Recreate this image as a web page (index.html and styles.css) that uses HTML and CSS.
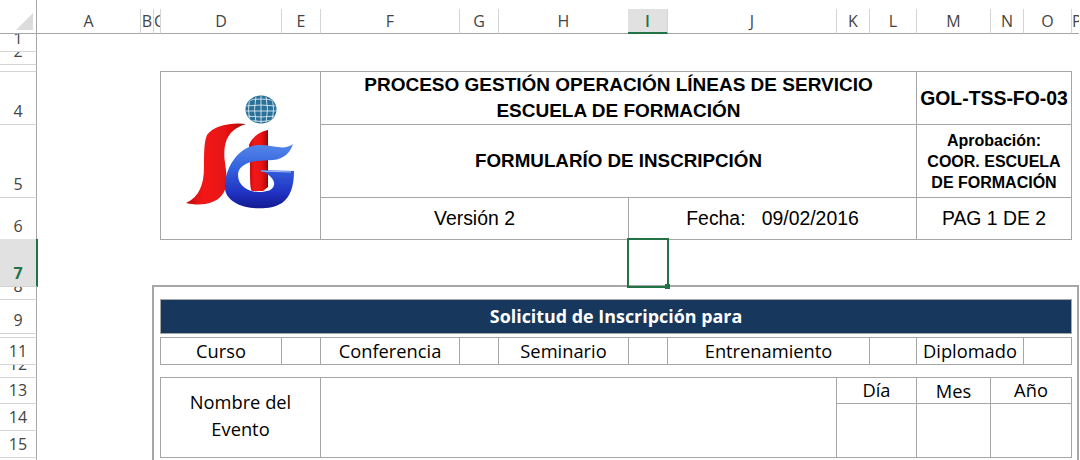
FILE: index.html
```html
<!DOCTYPE html>
<html lang="es">
<head>
  <meta charset="UTF-8" />
  <title>Formulario de Inscripción</title>
  <link rel="stylesheet" href="styles.css">
</head>
<body>
  <div class="sheet">
    <!-- column headers -->
    <div class="corner"><div class="corner-tri"></div></div>
    <div class="ch col-a">A</div>
    <div class="ch col-b">B</div>
    <div class="ch col-c">C</div>
    <div class="ch col-d">D</div>
    <div class="ch col-e">E</div>
    <div class="ch col-f">F</div>
    <div class="ch col-g">G</div>
    <div class="ch col-h">H</div>
    <div class="ch col-i ch-on">I</div>
    <div class="ch col-j">J</div>
    <div class="ch col-k">K</div>
    <div class="ch col-l">L</div>
    <div class="ch col-m">M</div>
    <div class="ch col-n">N</div>
    <div class="ch col-o">O</div>
    <div class="ch col-p">P</div>

    <!-- row headers -->
    <div class="rh row-1"><span>1</span></div>
    <div class="rh row-2"><span>2</span></div>
    <div class="rh row-3"></div>
    <div class="rh row-4"><span>4</span></div>
    <div class="rh row-5"><span>5</span></div>
    <div class="rh row-6"><span>6</span></div>
    <div class="rh row-7 rh-on"><span>7</span></div>
    <div class="rh row-8"><span>8</span></div>
    <div class="rh row-9"><span>9</span></div>
    <div class="rh row-10"></div>
    <div class="rh row-11"><span>11</span></div>
    <div class="rh row-12"><span>12</span></div>
    <div class="rh row-13"><span>13</span></div>
    <div class="rh row-14"><span>14</span></div>
    <div class="rh row-15"><span>15</span></div>
    <div class="rh row-16"><span>16</span></div>

    <!-- document header -->
    <div class="cell logo">
      <svg class="logo-svg" viewBox="160 71 160 168" xmlns="http://www.w3.org/2000/svg">
        <defs>
          <linearGradient id="redFill" x1="0" y1="0" x2="1" y2="0">
            <stop offset="0" stop-color="#c20a0a" />
            <stop offset="0.3" stop-color="#f41818" />
            <stop offset="0.75" stop-color="#e21010" />
            <stop offset="1" stop-color="#8e0505" />
          </linearGradient>
          <linearGradient id="blueFill" x1="0" y1="0" x2="0" y2="1">
            <stop offset="0" stop-color="#5586ea" />
            <stop offset="0.35" stop-color="#3565de" />
            <stop offset="0.75" stop-color="#2233c4" />
            <stop offset="1" stop-color="#121a90" />
          </linearGradient>
          <clipPath id="globeClip">
            <ellipse cx="260" cy="108.5" rx="15" ry="13.5" />
          </clipPath>
          <filter id="soft" x="-10%" y="-10%" width="120%" height="120%">
            <feGaussianBlur stdDeviation="0.75" />
          </filter>
        </defs>
        <g filter="url(#soft)">
          <ellipse cx="260" cy="108.5" rx="15.5" ry="14" fill="#2a7199" />
          <g clip-path="url(#globeClip)" stroke="#d8e8f0" stroke-width="0.9" fill="none">
            <path d="M245 100 Q260 96 275 100 M245 105 Q260 103 275 105 M245 110 H275 M245 115 Q260 117 275 115 M245 119 Q260 122 275 119" />
            <path d="M250 95 Q245 108 250 122 M255 95 Q252 108 255 122 M260 95 V122 M265 95 Q268 108 265 122 M270 95 Q275 108 270 122" />
          </g>
          <path fill="url(#redFill)" d="M245 123 C232 121 213 124 206 134 C203 141 203 152 203 166 C203 184 198 196 185 202 C198 205 213 204 221 194 C227 187 226 176 224 162 C222 148 224 136 233 129 C237 126 241 124 245 123 Z" />
          <path fill="url(#redFill)" d="M267 129 L267 186 L262 190 L251 190 C249 188 249 180 249 160 L248 144 C251 136 258 131 267 129 Z" />
          <path fill="url(#blueFill)" d="M292 143 C289 152 283 158 272 159 L256 160 C245 161 237 166 237 174 C237 184 246 191 258 191 C266 191 272 189 273 184 C274 179 269 173 258 169 L293 170 C293 186 289 196 281 202 C273 207 262 208 252 207 C238 206 224 198 224 187 C223 172 233 152 248 146 C258 142 268 145 277 146 C283 147 288 146 292 143 Z" />
          <path fill="none" stroke="#dfe9ff" stroke-width="1.2" opacity="0.7" d="M260 170 L290 171" />
        </g>
      </svg>
    </div>
    <div class="cell title bold">PROCESO GESTIÓN OPERACIÓN LÍNEAS DE SERVICIO<br>ESCUELA DE FORMACIÓN</div>
    <div class="cell code bold">GOL-TSS-FO-03</div>
    <div class="cell subtitle bold">FORMULARÍO DE INSCRIPCIÓN</div>
    <div class="cell approval bold">Aprobación:<br>COOR. ESCUELA<br>DE FORMACIÓN</div>
    <div class="cell version arial">Versión 2</div>
    <div class="cell date arial">Fecha:   09/02/2016</div>
    <div class="cell page arial">PAG 1 DE 2</div>

    <!-- form box -->
    <div class="form-box"></div>
    <div class="cell banner">Solicitud de Inscripción para</div>

    <div class="cell kind k-curso">Curso</div>
    <div class="cell k-curso-v"></div>
    <div class="cell kind k-conf">Conferencia</div>
    <div class="cell k-conf-v"></div>
    <div class="cell kind k-sem">Seminario</div>
    <div class="cell k-sem-v"></div>
    <div class="cell kind k-ent">Entrenamiento</div>
    <div class="cell k-ent-v"></div>
    <div class="cell kind k-dip">Diplomado</div>
    <div class="cell k-dip-v"></div>

    <div class="cell kind event-label">Nombre del<br>Evento</div>
    <div class="cell event-value"></div>
    <div class="cell kind day-h">Día</div>
    <div class="cell kind month-h">Mes</div>
    <div class="cell kind year-h">Año</div>
    <div class="cell day-v"></div>
    <div class="cell month-v"></div>
    <div class="cell year-v"></div>

    <!-- selected cell -->
    <div class="selected"><div class="handle"></div></div>
  </div>
</body>
</html>
```

FILE: styles.css
```css
html, body {
  margin: 0;
  padding: 0;
  background-color: white;
}
.sheet {
  display: grid;
  width: 1080px;
  height: 460px;
  overflow: hidden;
  font-family: 'Open Sans', 'Noto Sans', sans-serif;
  color: black;
  grid-template-columns:
    [hdr] 37px [a] 104px [b] 13px [c] 7px [d] 121px [e] 39px [f] 139px [g] 39px
    [h] 130px [i] 39px [j] 169px [k] 33px [l] 47px [m] 74px [n] 33px [o] 48px
    [p] 7px [q] 1fr;
  grid-template-rows:
    [top] 34px [r1] 18px [r2] 13px [r3] 7px [r4] 53px [r5] 73px [r6] 42px [r7] 47px
    [r8] 13px [r9] 34px [r10] 4px [r11] 27px [r12] 13px [r13] 26px [r14] 27px
    [r15] 27px [r16] 1fr;
}

/* column headers */
.corner {
  grid-column: hdr / a;
  grid-row: top / r1;
  border-right: 1px solid #a6a6a6;
  border-bottom: 1px solid #a6a6a6;
  position: relative;
}
.corner-tri {
  position: absolute;
  left: 16px;
  top: 13px;
  width: 17px;
  height: 17px;
  background-color: #dcdcdc;
  clip-path: polygon(100% 0, 100% 100%, 0 100%);
}
.ch {
  grid-row: top / r1;
  margin-top: 9px;
  border-right: 1px solid #d4d4d4;
  border-bottom: 1px solid #a6a6a6;
  overflow: hidden;
  text-align: center;
  font-size: 16px;
  line-height: 24px;
  color: #444;
}
.ch-on {
  background-color: #e1e1e1;
  color: #217346;
  font-weight: 600;
  border-bottom: 2px solid #217346;
  margin-left: -1px;
}
.col-a { grid-column: a / b; }
.col-b { grid-column: b / c; }
.col-c { grid-column: c / d; }
.col-d { grid-column: d / e; }
.col-e { grid-column: e / f; }
.col-f { grid-column: f / g; }
.col-g { grid-column: g / h; }
.col-h { grid-column: h / i; }
.col-i { grid-column: i / j; }
.col-j { grid-column: j / k; }
.col-k { grid-column: k / l; }
.col-l { grid-column: l / m; }
.col-m { grid-column: m / n; }
.col-n { grid-column: n / o; }
.col-o { grid-column: o / p; }
.col-p { grid-column: p / q; border-right: none; }

/* row headers */
.rh {
  grid-column: hdr / a;
  display: flex;
  align-items: flex-end;
  justify-content: center;
  overflow: hidden;
  border-right: 1px solid #a6a6a6;
  border-bottom: 1px solid #d4d4d4;
  font-size: 16px;
  color: #444;
}
.rh span {
  display: block;
  flex: none;
  line-height: 22px;
  height: 22px;
  margin-bottom: 2px;
}
.rh-on {
  background-color: #e1e1e1;
  color: #217346;
  font-weight: 700;
  border-right: 2px solid #217346;
  margin-top: -1px;
  margin-right: -1px;
}
.row-1 { grid-row: r1 / r2; }
.row-2 { grid-row: r2 / r3; }
.row-3 { grid-row: r3 / r4; }
.row-4 { grid-row: r4 / r5; }
.row-5 { grid-row: r5 / r6; }
.row-6 { grid-row: r6 / r7; }
.row-7 { grid-row: r7 / r8; }
.row-8 { grid-row: r8 / r9; }
.row-9 { grid-row: r9 / r10; }
.row-10 { grid-row: r10 / r11; }
.row-11 { grid-row: r11 / r12; }
.row-12 { grid-row: r12 / r13; }
.row-13 { grid-row: r13 / r14; }
.row-14 { grid-row: r14 / r15; }
.row-15 { grid-row: r15 / r16; }
.row-16 { grid-row: r16 / span 1; border-bottom: none; }

/* bordered cells */
.cell {
  display: flex;
  align-items: center;
  justify-content: center;
  text-align: center;
  margin: -1px 0 0 -1px;
  border: 1px solid #a6a6a6;
  min-width: 0;
  min-height: 0;
}
.bold {
  font-family: 'Liberation Sans', Arial, sans-serif;
  font-weight: bold;
}
.arial {
  font-family: 'Liberation Sans', Arial, sans-serif;
  font-size: 19.4px;
}

.logo { grid-column: d / f; grid-row: r4 / r7; }
.logo-svg { display: block; width: 160px; height: 168px; flex: none; }
.title { grid-column: f / m; grid-row: r4 / r5; font-size: 19px; line-height: 26px; }
.code { grid-column: m / p; grid-row: r4 / r5; font-size: 19.4px; }
.subtitle { grid-column: f / m; grid-row: r5 / r6; font-size: 18.8px; }
.approval { grid-column: m / p; grid-row: r5 / r6; font-size: 16px; line-height: 21px; }
.version { grid-column: f / i; grid-row: r6 / r7; }
.date { grid-column: i / m; grid-row: r6 / r7; white-space: pre; }
.page { grid-column: m / p; grid-row: r6 / r7; }

.form-box {
  grid-column: c / -1;
  grid-row: r8 / -1;
  margin: -2px 1px -10px -2px;
  border: 2px solid #a6a6a6;
  box-sizing: border-box;
}
.banner {
  grid-column: d / p;
  grid-row: r9 / r10;
  padding-bottom: 2px;
  box-sizing: border-box;
  background-color: #17375d;
  color: white;
  font-weight: bold;
  font-size: 17.9px;
}
.kind {
  font-size: 18.3px;
  line-height: 27px;
  padding-bottom: 1px;
}
.k-curso { grid-column: d / e; grid-row: r11 / r12; }
.k-curso-v { grid-column: e / f; grid-row: r11 / r12; }
.k-conf { grid-column: f / g; grid-row: r11 / r12; }
.k-conf-v { grid-column: g / h; grid-row: r11 / r12; }
.k-sem { grid-column: h / i; grid-row: r11 / r12; }
.k-sem-v { grid-column: i / j; grid-row: r11 / r12; }
.k-ent { grid-column: j / l; grid-row: r11 / r12; }
.k-ent-v { grid-column: l / m; grid-row: r11 / r12; }
.k-dip { grid-column: m / o; grid-row: r11 / r12; }
.k-dip-v { grid-column: o / p; grid-row: r11 / r12; }

.event-label { grid-column: d / f; grid-row: r13 / r16; padding-bottom: 6px; }
.event-value { grid-column: f / k; grid-row: r13 / r16; }
.day-h { grid-column: k / m; grid-row: r13 / r14; padding-bottom: 2px; }
.month-h { grid-column: m / n; grid-row: r13 / r14; padding-bottom: 0; }
.year-h { grid-column: n / p; grid-row: r13 / r14; padding-bottom: 2px; }
.day-v { grid-column: k / m; grid-row: r14 / r16; }
.month-v { grid-column: m / n; grid-row: r14 / r16; }
.year-v { grid-column: n / p; grid-row: r14 / r16; }

/* active cell */
.selected {
  grid-column: i / j;
  grid-row: r7 / r8;
  position: relative;
  margin: -2px -1px -1px -2px;
  border: 2px solid #217346;
}
.handle {
  position: absolute;
  right: -3px;
  bottom: -3px;
  width: 5px;
  height: 5px;
  background-color: #217346;
}
```
